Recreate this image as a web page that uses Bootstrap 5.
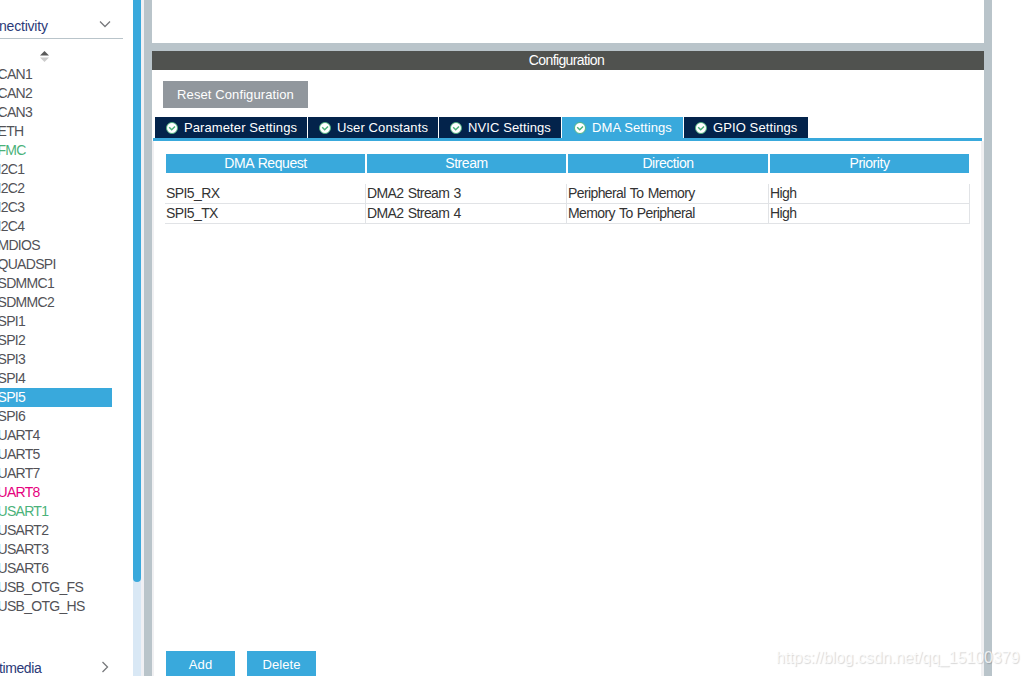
<!DOCTYPE html>
<html lang="en">
<head>
<meta charset="utf-8">
<title>Configuration</title>
<link href="https://cdn.jsdelivr.net/npm/bootstrap@5.3.0/dist/css/bootstrap.min.css" rel="stylesheet">
<style>
:root{--sky:#39a9dc;--navy:#03234b;--split:#b9c4ca}
body{font:14px/19px "Liberation Sans",Arial,sans-serif;letter-spacing:-.6px;word-spacing:1px;color:#333;height:676px;background:#fff}
.app{height:676px;width:1029px}
.side{width:133px;color:#525257}
.cat{height:39px;width:123px;border-bottom:1px solid var(--split);color:#2b3a78;padding-top:17px;letter-spacing:-.2px}
.cat svg,.cat2 svg{flex:none}
.cut{margin-left:-1px}
.sorter{height:26px;padding:12px 0 0 40px}
.periph{margin:0;width:112px}
.periph li{height:19px;padding:0;white-space:nowrap;text-indent:-2.5px;letter-spacing:-.7px}
.on{background:var(--sky);color:#fff}
.ok{color:#4bb27a}.bad{color:#e6007e}
.cat2{margin-top:43px;width:123px;color:#2b3a78;letter-spacing:-.4px}
.track{width:8px;background:#d9e8f5}
.thumb{height:582px;background:var(--sky);border-radius:0 0 4px 4px}
.gap3{width:3px;background:#f0f0f4}
.work{width:848px;border:solid var(--split);border-width:0 8px}
.upper{height:51px;border-bottom:8px solid var(--split)}
.title{height:19px;background:#50524f;color:#fff;padding-right:3px}
.flat,.tabs a{font-size:13px;letter-spacing:.1px;word-spacing:0}
.flat{border:0;border-radius:0;color:#fff;padding:0;line-height:19px}
.flat:hover{color:#fff}
.reset{width:145px;height:27px;background:#91979d;margin:11px 0 9px 11px}
.tabs{height:24px;margin:0 2px 0 1px;padding-left:2px;border-bottom:3px solid var(--sky);gap:1px}
.tabs a{height:21px;background:var(--navy);color:#fff;padding:0 0 0 11px;line-height:21px;white-space:nowrap;text-decoration:none}
.tabs a.now{background:var(--sky)}
.tabs a.now svg{margin-left:1px}
.tabs svg{margin-right:6px;flex:none}
.sheet{border:solid #f0f0f2;border-width:0 3px 0 2px;padding:13px 12px 0 11px}
.heads{display:grid;grid-template-columns:199px 199px 200px 199px;gap:2px;margin-left:1px;width:803px;letter-spacing:-.45px}
.heads div{background:var(--sky);color:#fff;text-align:center;height:19px}
.rowsx{margin-top:11px;width:805px}
.rec{display:grid;grid-template-columns:201px 201px 202px 201px;height:20px}
.rec div{border:solid #e1e3e6;border-width:0 1px 1px 0;padding-left:1px;white-space:nowrap}
.acts{gap:12px;margin-left:1px;height:25px}
.act{width:69px;height:27px;background:var(--sky)}
.mark-url{position:absolute;left:776px;top:648px;font-size:16px;line-height:20px;letter-spacing:-.07px;color:rgba(255,255,255,.8);text-shadow:1px 1px 1px rgba(0,0,0,.16);white-space:nowrap}
</style>
</head>
<body class="overflow-hidden">
<svg class="d-none"><symbol id="tick" viewBox="0 0 12 12"><circle cx="6" cy="6" r="5.5" fill="#fff" stroke="#4bb27a" stroke-width=".9"/><path d="M3.2 5.3 5.7 7.8 9 4.5" fill="none" stroke="#4bb27a" stroke-width="1.5"/></symbol></svg>
<div class="app d-flex position-relative overflow-hidden">
  <aside class="side overflow-hidden flex-shrink-0">
    <div class="cat d-flex justify-content-between"><span class="cut">nectivity</span>
      <svg width="12" height="8" style="margin:3px 12px 0 0" viewBox="0 0 12 8"><path d="M1 1.5 6 6.5 11 1.5" fill="none" stroke="#77797c" stroke-width="1.3"/></svg></div>
    <div class="sorter d-flex"><svg width="9" height="11" viewBox="0 0 9 11"><path d="M0 4.5 4.5 0 9 4.5z" fill="#5a5a5a"/><path d="M0 6.5H9L4.5 11z" fill="#ccc"/></svg></div>
    <ul class="periph list-unstyled">
      <li>CAN1</li><li>CAN2</li><li>CAN3</li><li>ETH</li><li class="ok">FMC</li><li>I2C1</li><li>I2C2</li><li>I2C3</li><li>I2C4</li><li>MDIOS</li><li>QUADSPI</li><li>SDMMC1</li><li>SDMMC2</li><li>SPI1</li><li>SPI2</li><li>SPI3</li><li>SPI4</li><li class="on">SPI5</li><li>SPI6</li><li>UART4</li><li>UART5</li><li>UART7</li><li class="bad">UART8</li><li class="ok">USART1</li><li>USART2</li><li>USART3</li><li>USART6</li><li>USB_OTG_FS</li><li>USB_OTG_HS</li>
    </ul>
    <div class="cat2 d-flex justify-content-between"><span class="cut">timedia</span>
      <svg width="8" height="12" style="margin:2px 14px 0 0" viewBox="0 0 8 12"><path d="M1.5 1 6.5 6 1.5 11" fill="none" stroke="#77797c" stroke-width="1.3"/></svg></div>
  </aside>
  <div class="track flex-shrink-0"><div class="thumb"></div></div>
  <div class="gap3 flex-shrink-0"></div>
  <main class="work d-flex flex-column flex-shrink-0">
    <div class="upper flex-shrink-0"></div>
    <div class="title text-center flex-shrink-0">Configuration</div>
    <div><button class="btn flat reset d-block">Reset Configuration</button></div>
    <nav class="tabs d-flex flex-shrink-0">
      <a href="#" class="d-flex align-items-center" style="width:152px"><svg width="12" height="12"><use href="#tick"/></svg>Parameter Settings</a>
      <a href="#" class="d-flex align-items-center" style="width:130px"><svg width="12" height="12"><use href="#tick"/></svg>User Constants</a>
      <a href="#" class="d-flex align-items-center" style="width:122px"><svg width="12" height="12"><use href="#tick"/></svg>NVIC Settings</a>
      <a href="#" class="now d-flex align-items-center" style="width:121px"><svg width="12" height="12"><use href="#tick"/></svg>DMA Settings</a>
      <a href="#" class="d-flex align-items-center" style="width:124px"><svg width="12" height="12"><use href="#tick"/></svg>GPIO Settings</a>
    </nav>
    <section class="sheet flex-grow-1 d-flex flex-column">
      <div class="heads"><div>DMA Request</div><div>Stream</div><div>Direction</div><div>Priority</div></div>
      <div class="rowsx">
        <div class="rec"><div>SPI5_RX</div><div>DMA2 Stream 3</div><div>Peripheral To Memory</div><div>High</div></div>
        <div class="rec"><div>SPI5_TX</div><div>DMA2 Stream 4</div><div>Memory To Peripheral</div><div>High</div></div>
      </div>
      <div class="acts d-flex mt-auto"><button class="btn flat act">Add</button><button class="btn flat act">Delete</button></div>
    </section>
  </main>
  <div class="mark-url">https://blog.csdn.net/qq_15100379</div>
</div>
<script src="https://cdn.jsdelivr.net/npm/bootstrap@5.3.0/dist/js/bootstrap.bundle.min.js"></script>
</body>
</html>
